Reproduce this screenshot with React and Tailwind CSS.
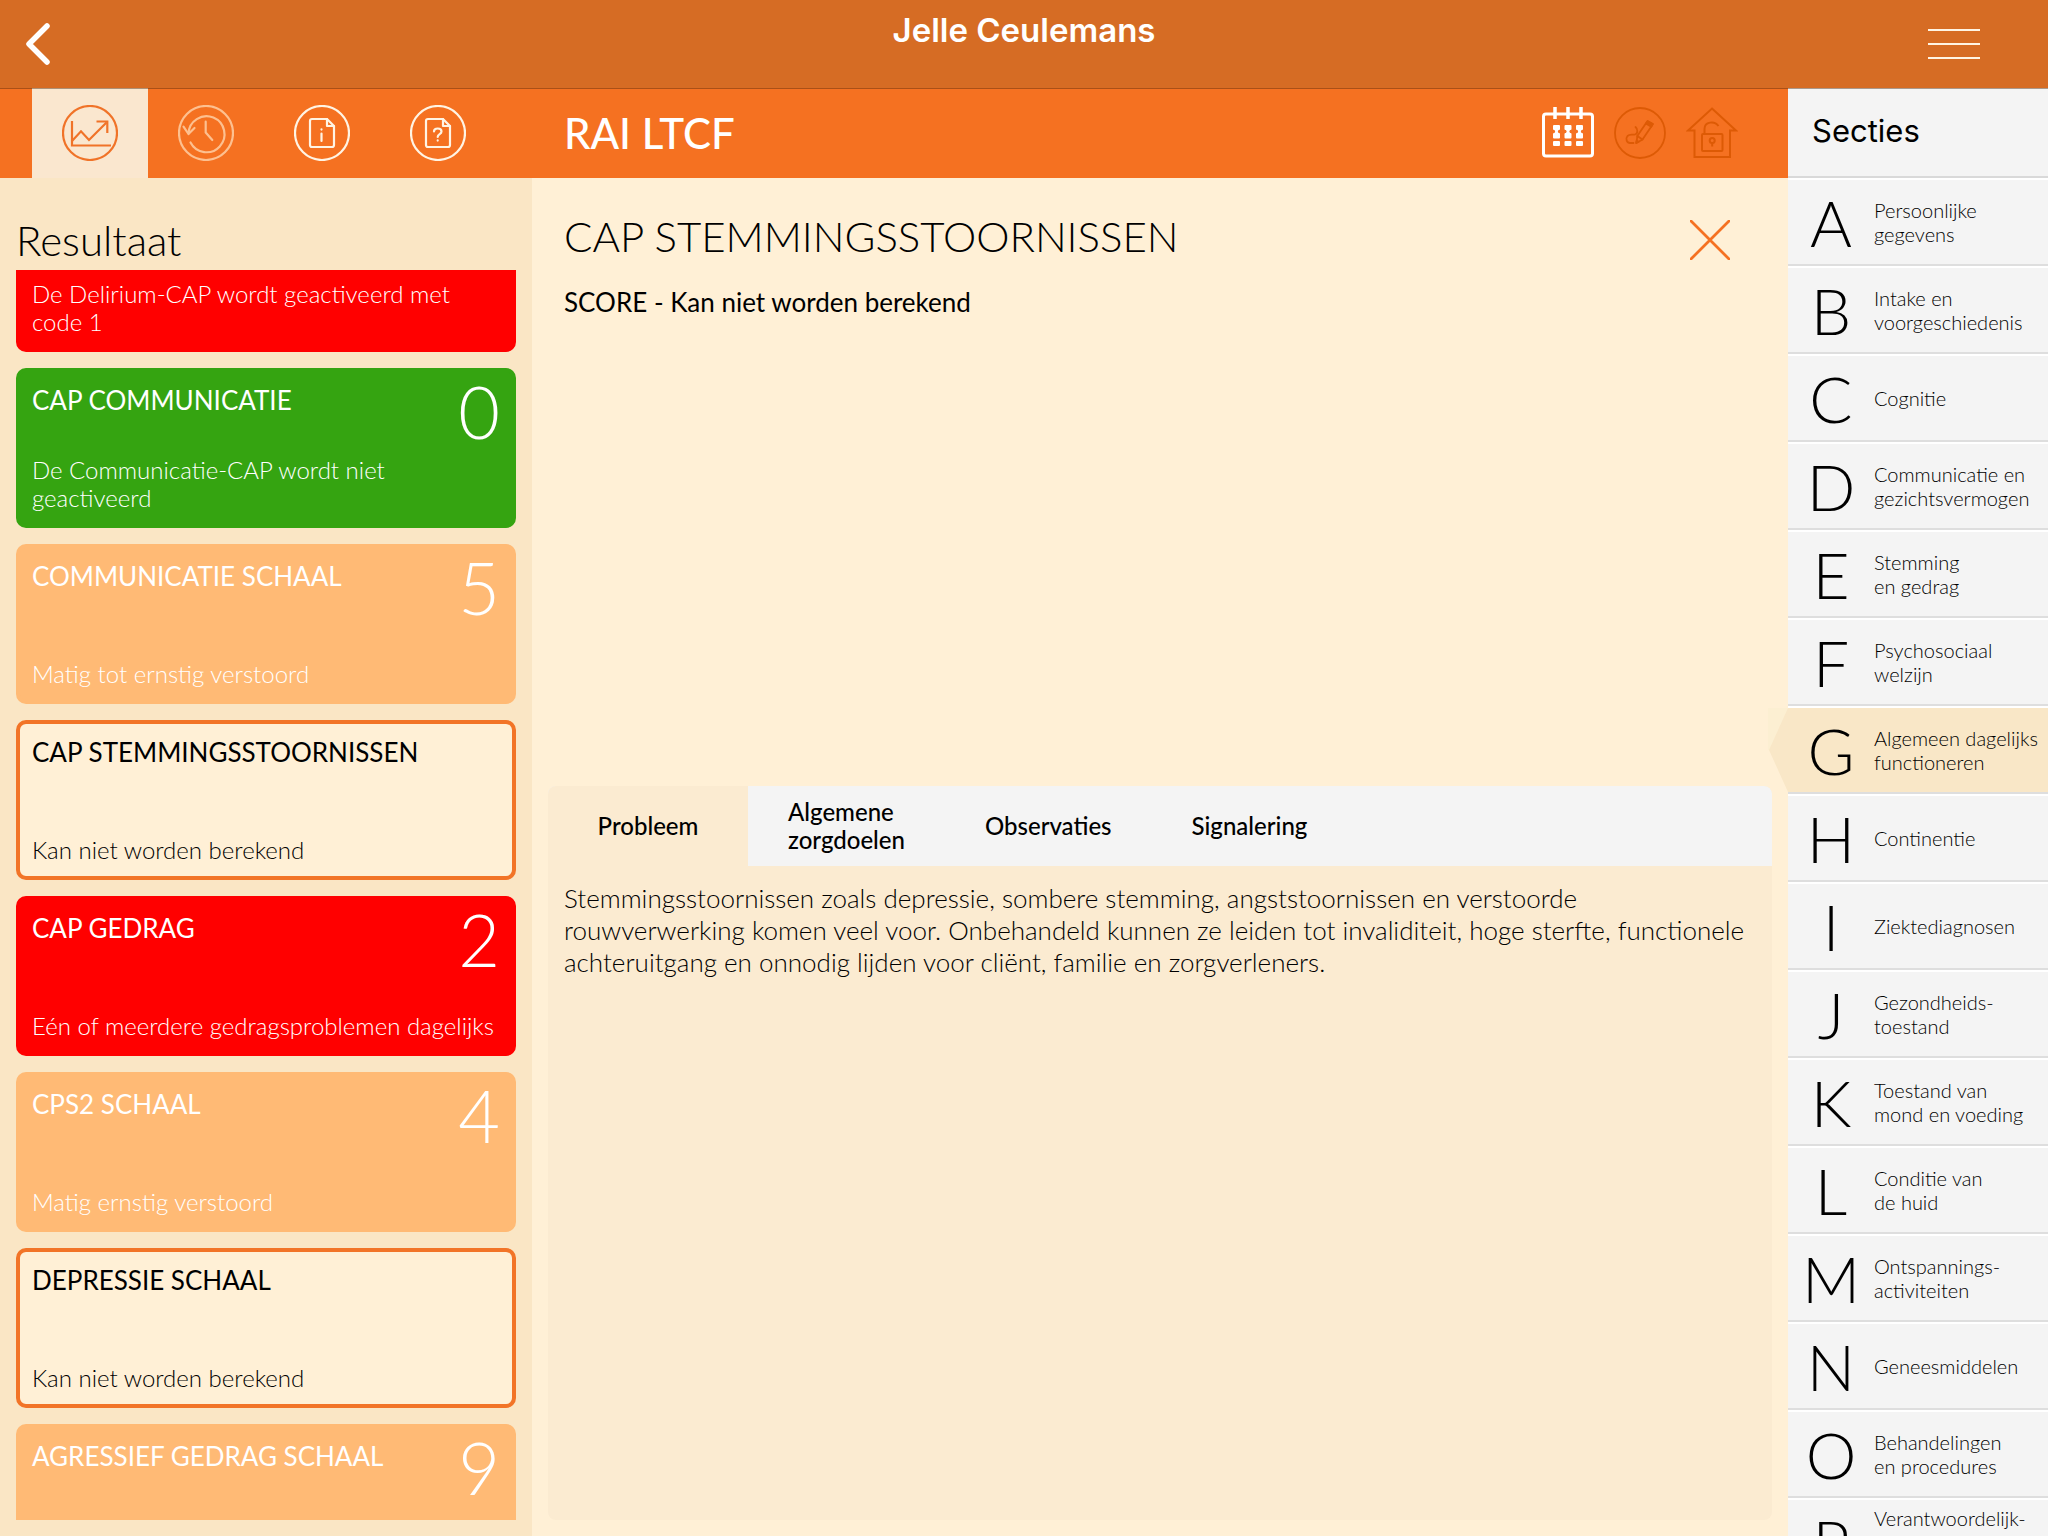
import { useLayoutEffect, useRef, useState } from "react";

const CARDS = [
  { id: "delirium", title: "", score: "", text: "De Delirium-CAP wordt geactiveerd met code 1", tone: "red" },
  { id: "communicatie", title: "CAP COMMUNICATIE", score: "0", text: "De Communicatie-CAP wordt niet geactiveerd", tone: "green" },
  { id: "communicatie-schaal", title: "COMMUNICATIE SCHAAL", score: "5", text: "Matig tot ernstig verstoord", tone: "orange" },
  { id: "stemming", title: "CAP STEMMINGSSTOORNISSEN", score: "", text: "Kan niet worden berekend", tone: "plain" },
  { id: "gedrag", title: "CAP GEDRAG", score: "2", text: "Eén of meerdere gedragsproblemen dagelijks", tone: "red" },
  { id: "cps2", title: "CPS2 SCHAAL", score: "4", text: "Matig ernstig verstoord", tone: "orange" },
  { id: "depressie", title: "DEPRESSIE SCHAAL", score: "", text: "Kan niet worden berekend", tone: "plain" },
  { id: "agressie", title: "AGRESSIEF GEDRAG SCHAAL", score: "9", text: "", tone: "orange" },
];

const TONES = {
  red: "bg-[#ff0000] border-[#ff0000] text-white",
  green: "bg-[#35a411] border-[#35a411] text-white",
  orange: "bg-[#ffba75] border-[#ffba75] text-white",
  plain: "bg-[#fff0d6] border-[#f27427] text-black",
};

const SECTIONS = [
  ["A", "Persoonlijke", "gegevens"],
  ["B", "Intake en", "voorgeschiedenis"],
  ["C", "Cognitie"],
  ["D", "Communicatie en", "gezichtsvermogen"],
  ["E", "Stemming", "en gedrag"],
  ["F", "Psychosociaal", "welzijn"],
  ["G", "Algemeen dagelijks", "functioneren"],
  ["H", "Continentie"],
  ["I", "Ziektediagnosen"],
  ["J", "Gezondheids-", "toestand"],
  ["K", "Toestand van", "mond en voeding"],
  ["L", "Conditie van", "de huid"],
  ["M", "Ontspannings-", "activiteiten"],
  ["N", "Geneesmiddelen"],
  ["O", "Behandelingen", "en procedures"],
  ["P", "Verantwoordelijk-", "heid en", "richtlijnen"],
];

const TABS = [
  ["Probleem"],
  ["Algemene", "zorgdoelen"],
  ["Observaties"],
  ["Signalering"],
];

function RoundIcon({ children }) {
  return (
    <svg viewBox="0 0 56 56" className="size-14" fill="none" stroke="currentColor" strokeWidth="2.2" strokeLinecap="round" strokeLinejoin="round" aria-hidden="true">
      <circle cx="28" cy="28" r="27" />
      {children}
    </svg>
  );
}

const ChartIcon = () => (
  <RoundIcon>
    <g strokeLinecap="butt" strokeLinejoin="miter">
      <path d="M10 16V40.5H49" />
      <path d="M10 36L19 26.3L27 35L44.5 17.5" />
      <path d="M34.5 16.5H45.3V28" />
    </g>
  </RoundIcon>
);

const HistoryIcon = () => (
  <RoundIcon>
    <path d="M10.5 28.5A18 18 0 1 1 12.5 37.5" />
    <path d="M5.5 21.7L10.5 29L16.5 23" />
    <path d="M27.7 16.7V27.5L34.3 35" />
  </RoundIcon>
);

const InfoIcon = () => (
  <RoundIcon>
    <path d="M18 14H33L40 21V40A2 2 0 0 1 38 42H18A2 2 0 0 1 16 40V16A2 2 0 0 1 18 14Z" />
    <path d="M33 14V21H40" />
    <path d="M27.5 28.5V36M27.5 24.4V24.6" />
  </RoundIcon>
);

const QuestionIcon = () => (
  <RoundIcon>
    <path d="M18 14H33L40 21V40A2 2 0 0 1 38 42H18A2 2 0 0 1 16 40V16A2 2 0 0 1 18 14Z" />
    <path d="M33 14V21H40" />
    <path d="M24 26.5C24 22.5 31.5 22.5 31.5 26.5C31.5 29.5 27.7 28.8 27.7 32M27.7 35.4V35.6" />
  </RoundIcon>
);

function CalendarIcon() {
  return (
    <svg viewBox="0 0 52 52" className="size-13" fill="none" stroke="#fff" aria-hidden="true">
      <rect x="1.5" y="7" width="49" height="42" rx="2.5" strokeWidth="3" />
      <path d="M13 0V12M26 0V12M39 0V12" strokeWidth="3.5" />
      {[11, 22.5, 34].map((x) => (
        <g key={x} fill="#fff" stroke="none">
          <rect x={x} y="18" width="7" height="5" rx="1" />
          <path d={`M${x + 1} 22H${x + 6}L${x + 4.8} 24.5L${x + 6} 27H${x + 1}L${x + 2.2} 24.5Z`} />
          <rect x={x} y="26" width="7" height="5.5" rx="1" />
          <rect x={x} y="34" width="7" height="5" rx="1" />
        </g>
      ))}
    </svg>
  );
}

function SignIcon() {
  return (
    <svg viewBox="0 0 52 52" className="size-13" fill="none" stroke="#dd5a05" strokeWidth="1.8" strokeLinejoin="round" strokeLinecap="round" aria-hidden="true">
      <circle cx="26" cy="26" r="25" />
      <path d="M22.5 36L23.3 29L33.5 14L39 17L28.5 32.5Z" />
      <path d="M23.3 29L28.5 32.5M31.8 16.5L37.3 19.8" />
      <path d="M34 14.5L38.5 17L37.5 19L32.5 16Z" fill="#dd5a05" />
      <path d="M22 36L24.5 34.8L22.6 33.6Z" fill="#dd5a05" />
      <path d="M21.5 20C24 22 24 26.5 21 27.5C18.5 28.2 16 26.5 13.5 29C11 32 13 36 16 36H19.5" />
    </svg>
  );
}

function HouseIcon() {
  return (
    <svg viewBox="0 0 52 52" className="size-13" fill="none" stroke="#dd5a05" strokeWidth="2" aria-hidden="true">
      <path d="M26 1.5L50 23.5H44V50H8.5V23.5H2Z" />
      <rect x="16" y="27" width="20.5" height="17" rx="1" />
      <path d="M18.5 27V22C18.5 14.5 28.5 13.5 32.5 19" />
      <circle cx="26.2" cy="33.5" r="2.5" />
      <path d="M26.2 36V39.5" />
    </svg>
  );
}

const VIEW_TABS = [
  { label: "Resultaat", Icon: ChartIcon, cls: "bg-[#fae7cf] text-[#f07328]" },
  { label: "Geschiedenis", Icon: HistoryIcon, cls: "text-[#fdc090]" },
  { label: "Informatie", Icon: InfoIcon, cls: "text-[#fff4e4]" },
  { label: "Hulp", Icon: QuestionIcon, cls: "text-[#fff4e4]" },
];

function TopBar() {
  return (
    <header className="relative z-10 grid h-22 shrink-0 grid-cols-[1fr_auto_1fr] bg-[#d66c24] shadow-[0_1px_0_rgba(80,40,10,0.45)]">
      <button aria-label="Terug" className="flex w-20 items-center pl-6">
        <svg viewBox="0 0 28 44" className="h-11 w-7" fill="none" stroke="#fff" strokeWidth="5.5" strokeLinecap="round" strokeLinejoin="round" aria-hidden="true">
          <path d="M23 4L5 22L23 40" />
        </svg>
      </button>
      <h1 className="pt-2.5 font-['Inter',sans-serif] text-[33px] leading-10 font-semibold text-white">Jelle Ceulemans</h1>
      <button aria-label="Menu" className="mr-17 flex flex-col gap-3 self-center justify-self-end">
        <span className="h-0.5 w-13 bg-[#fff4e4]" />
        <span className="h-0.5 w-13 bg-[#fff4e4]" />
        <span className="h-0.5 w-13 bg-[#fff4e4]" />
      </button>
    </header>
  );
}

function ToolBar() {
  return (
    <div className="flex h-[90px] shrink-0 bg-[#f57121]">
      <nav className="flex w-[532px] shrink-0 pl-8">
        {VIEW_TABS.map(({ label, Icon, cls }) => (
          <button key={label} aria-label={label} className={`flex w-29 items-center justify-center ${cls}`}>
            <Icon />
          </button>
        ))}
      </nav>
      <h2 className="grow self-center pl-8 text-[42px] leading-[52px] font-medium text-white">RAI LTCF</h2>
      <div className="mr-[50px] flex items-center gap-5">
        <button aria-label="Kalender"><CalendarIcon /></button>
        <button aria-label="Ondertekenen"><SignIcon /></button>
        <button aria-label="Ontgrendelen"><HouseIcon /></button>
      </div>
    </div>
  );
}

function ResultCard({ title, score, text, tone }) {
  return (
    <button className={`flex h-40 w-full shrink-0 flex-col justify-between rounded-[10px] border-4 p-3 text-left ${TONES[tone]}`}>
      <span className="flex h-9 w-full items-start justify-between">
        <span className="text-[26px] leading-8">{title}</span>
        <span className="-mt-2 text-[72px] leading-[70px] font-light">{score}</span>
      </span>
      <span className="text-2xl leading-7 font-light">{text}</span>
    </button>
  );
}

function ResultList() {
  const list = useRef(null);
  useLayoutEffect(() => {
    list.current.scrollTop = 98;
  }, []);
  return (
    <aside className="flex w-[532px] shrink-0 flex-col bg-[#fae6c5] px-4 pt-9 pb-4">
      <h3 className="pb-1 text-[42px] leading-[52px] font-light">Resultaat</h3>
      <div ref={list} className="flex min-h-0 grow flex-col gap-4 overflow-y-auto pt-5 pb-4 [scrollbar-width:none]">
        {CARDS.map((card) => (
          <ResultCard key={card.id} {...card} />
        ))}
      </div>
    </aside>
  );
}

function Detail() {
  const [active, setActive] = useState("Probleem");
  return (
    <main className="flex min-w-0 grow flex-col bg-[#fff0d6] px-4 pb-4">
      <section className="min-h-[608px] shrink-0 px-4 pt-8">
        <div className="flex items-start justify-between">
          <h3 className="text-[42px] leading-[52px] font-light">CAP STEMMINGSSTOORNISSEN</h3>
          <button aria-label="Sluiten" className="mr-[26px] pt-2.5">
            <svg viewBox="0 0 40 40" className="size-10" stroke="#f57121" strokeWidth="2.8" aria-hidden="true">
              <path d="M0 0L40 40M40 0L0 40" />
            </svg>
          </button>
        </div>
        <p className="mt-6 text-[26px] leading-8">SCORE - Kan niet worden berekend</p>
      </section>
      <section className="flex grow flex-col overflow-hidden rounded-lg bg-[#fbebd1]">
        <div role="tablist" className="flex h-20 shrink-0 bg-[#f4f4f4]">
          {TABS.map((lines) => (
            <button
              key={lines[0]}
              role="tab"
              aria-selected={active === lines[0]}
              onClick={() => setActive(lines[0])}
              className={`px-10 text-left text-2xl leading-7 font-medium first:min-w-50 first:text-center ${active === lines[0] ? "bg-[#fbebd1]" : ""}`}
            >
              {lines.map((line) => (
                <span key={line} className="block">{line}</span>
              ))}
            </button>
          ))}
        </div>
        <p className="p-4 text-[26px] leading-8 font-light">
          Stemmingsstoornissen zoals depressie, sombere stemming, angststoornissen en verstoorde rouwverwerking komen veel voor. Onbehandeld kunnen ze leiden tot invaliditeit, hoge sterfte, functionele achteruitgang en onnodig lijden voor cliënt, familie en zorgverleners.
        </p>
      </section>
    </main>
  );
}

function Sections() {
  return (
    <aside className="flex w-65 shrink-0 flex-col bg-[#f4f4f4]">
      <h2 className="flex h-[90px] shrink-0 items-center border-b-2 border-[#d9d9d9] pb-0.5 pl-6 font-['Inter',sans-serif] text-[31px] leading-10">Secties</h2>
      <nav className="min-h-0 grow">
        {SECTIONS.map(([letter, ...lines]) => {
          const current = letter === "G";
          return (
            <a
              key={letter}
              href={`#${letter}`}
              aria-current={current ? "true" : undefined}
              className={`relative flex h-22 items-center border-t-2 border-b-2 border-t-white border-b-[#dedede] ${current ? "bg-[#f9e7c7]" : ""}`}
            >
              {current && (
                <svg viewBox="0 0 20 84" className="absolute top-0 -left-5 h-21 w-5" aria-hidden="true">
                  <path d="M0 0H20V42H0Z" fill="#fcefd2" />
                  <path d="M20 0L1 42L20 84Z" fill="#f9e7c7" />
                </svg>
              )}
              <span className="w-[86px] shrink-0 pt-0.5 text-center text-[64px] leading-[64px] font-light">{letter}</span>
              <span className="text-xl leading-6 font-light whitespace-nowrap">
                {lines.map((line) => (
                  <span key={line} className="block">{line}</span>
                ))}
              </span>
            </a>
          );
        })}
      </nav>
    </aside>
  );
}

export default function App() {
  return (
    <div className="flex h-screen flex-col overflow-hidden font-['Lato',sans-serif] text-black">
      <TopBar />
      <div className="flex min-h-0 grow">
        <div className="flex min-w-0 grow flex-col">
          <ToolBar />
          <div className="flex min-h-0 grow">
            <ResultList />
            <Detail />
          </div>
        </div>
        <Sections />
      </div>
    </div>
  );
}
